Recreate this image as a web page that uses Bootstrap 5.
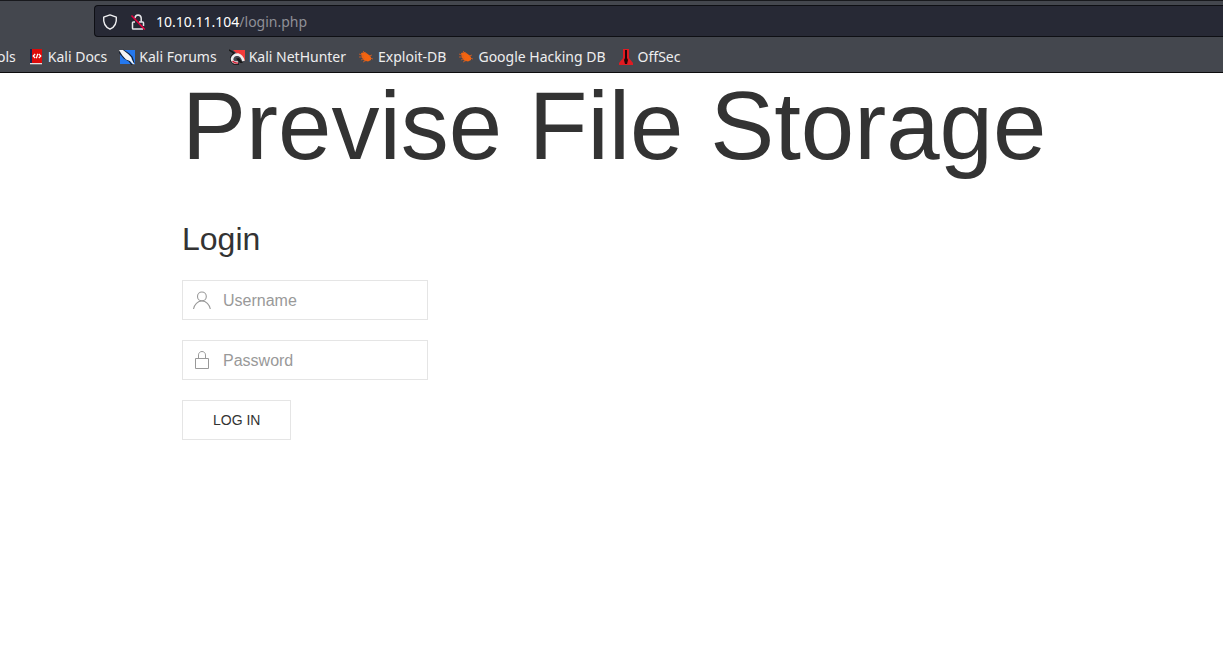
<!DOCTYPE html>
<html lang="en">
<head>
<meta charset="utf-8">
<meta name="viewport" content="width=device-width, initial-scale=1">
<title>Previse Login</title>
<link href="https://cdn.jsdelivr.net/npm/bootstrap@5.3.0/dist/css/bootstrap.min.css" rel="stylesheet">
<style>
body { font-family: "Liberation Sans", Arial, sans-serif; color: #333; background: #fff; }
.browser-bar { background: #44474e; border-top: 1px solid #18191d; border-bottom: 1px solid #0c0c0d; font-family: "Noto Sans", sans-serif; padding-top: 4px; }
.address { height: 32px; margin-left: 94px; padding: 1px 0 0 7px; gap: 10px; background: #272935; border: 1px solid #0e0f14; border-right: 0; border-radius: 4px 0 0 4px; font-size: 14px; line-height: 20px; color: #8f9097; }
.address b { color: #fff; font-weight: 400; }
.address-icons { gap: 12px; }
.bookmarks { height: 35px; gap: 12px; font-size: 14px; line-height: 20px; padding-top: 4px; margin-left: -3px; }
.bookmarks a { color: #eeeeef; gap: 4px; }
.bookmarks svg, .address svg { width: 16px; height: 16px; flex: none; }
.page-body { padding-left: 182px; }
.site-title { font-size: 96px; line-height: 106px; font-weight: 400; margin: 0 0 40px; }
.form-title { font-size: 32px; line-height: 41px; font-weight: 400; margin: 0 0 20px; }
.login-form { gap: 20px; }
.field { width: 246px; }
.field label { position: absolute; left: 10px; top: 10px; width: 20px; height: 20px; }
.field svg { display: block; width: 20px; height: 20px; fill: none; stroke: #999; }
.field .form-control { height: 40px; border: 1px solid #e5e5e5; border-radius: 0; padding: 2px 10px 0 40px; font-size: 16px; line-height: 24px; color: #666; }
.field .form-control::placeholder { color: #999; }
.login-btn { height: 40px; border: 1px solid #e5e5e5; border-radius: 0; padding: 0 30px; font-size: 14px; line-height: 38px; color: #333; text-transform: uppercase; }
</style>
</head>
<body>
<header class="browser-bar overflow-hidden">
  <div class="address d-flex align-items-center">
    <span class="address-icons d-flex">
    <svg viewBox="0 0 16 16" fill="none" stroke="#f0f0f2" stroke-width="1.4" stroke-linejoin="round"><path d="M8 .9 14.3 3.2Q15.2 11.8 8 15.2.8 11.8 1.7 3.2Z"/></svg>
    <svg viewBox="0 0 16 16" fill="none" stroke="#e6e6ea" stroke-width="1.5" stroke-linejoin="round"><path d="M5 4.2V4Q5.2 1 8 .9 11 1 11.2 4V8M5 8H3.3Q2.5 8 2.5 8.8V14.2Q2.5 15 3.3 15H13M9 8H12.7Q13.5 8 13.5 8.8V12"/><path d="M1.500 1.500 14.800 15.500" stroke="#e7003e" stroke-width="1.6"/></svg>
    </span>
    <span><b>10.10.11.104</b>/login.php</span>
  </div>
  <nav class="bookmarks d-flex align-items-center text-nowrap" aria-label="Bookmarks">
    <a href="#" class="text-decoration-none">ols</a>
    <a href="#" class="d-flex align-items-center text-decoration-none">
      <svg viewBox="0 0 16 16"><path d="M2 0h3v14H2z" fill="#16264f"/><path d="M4 0h10v14H4z" fill="#dc0a0a"/><path d="M2 14h12v1.300H2z" fill="#e8dede"/><path d="m7.200 5-2 2 2 2M10.800 5l2 2-2 2M9.800 4.700 8.300 9.300" fill="none" stroke="#fff" stroke-width="1.2"/></svg>Kali Docs</a>
    <a href="#" class="d-flex align-items-center text-decoration-none">
      <svg viewBox="0 0 16 16"><path d="M3 1h13v14H1V7z" fill="#2478ef"/><path d="m0 3 5 6 5 3 3 4M4 1l6 4 3 3 2 6" fill="none" stroke="#19212f" stroke-width="1.2"/><path d="M0 1h4l5 4 3 3 1 3 2.500 4.500-1.500-.5-3-3-4-1.500-3.500-4z" fill="#f4f4f4"/></svg>Kali Forums</a>
    <a href="#" class="d-flex align-items-center text-decoration-none">
      <svg viewBox="0 0 16 16"><path d="M4 1h12v11z" fill="#f23b3b"/><path d="m0 1 5 3-3 4v4l3 3h5" fill="none" stroke="#171717" stroke-width="1.500"/><path d="M7 9.500 10 9l4 5h-3z" fill="#171717"/><path d="M9 13.500Q3 14 3 10q1-4.500 6-4.500 4 1 5.500 6.500" fill="none" stroke="#eee" stroke-width="2.600"/><path d="M3.500 12q2 2.300 5.500 2" stroke="#d21f36" stroke-width="1.300" fill="none"/></svg>Kali NetHunter</a>
    <a href="#" class="d-flex align-items-center text-decoration-none">
      <svg viewBox="0 0 16 16"><path d="m3 4 4-1 4 3 2 2 0 3-3 1.500-4-1-2-3z" fill="#f4640f"/><path d="M1 5l5 2M1 8h5M3 11l4-2M5 13l4-2M5 2l3 3M11 7l3-1M12 9l3 1" stroke="#dc6020" stroke-width=".8"/></svg>Exploit-DB</a>
    <a href="#" class="d-flex align-items-center text-decoration-none">
      <svg viewBox="0 0 16 16"><path d="m3 4 4-1 4 3 2 2 0 3-3 1.500-4-1-2-3z" fill="#f4640f"/><path d="M1 5l5 2M1 8h5M3 11l4-2M5 13l4-2M5 2l3 3M11 7l3-1M12 9l3 1" stroke="#dc6020" stroke-width=".8"/></svg>Google Hacking DB</a>
    <a href="#" class="d-flex align-items-center text-decoration-none">
      <svg viewBox="0 0 16 16"><path d="M5 0h6v9l4 5v2H1v-2l4-5z" fill="#e01b22"/><path d="M7 1h2v8l1 2-1 4H7l-1-4 1-2z" fill="#210609"/></svg>OffSec</a>
  </nav>
</header>
<main class="page-body">
  <h1 class="site-title">Previse File Storage</h1>
  <h2 class="form-title">Login</h2>
  <form class="login-form d-flex flex-column align-items-start">
    <div class="field position-relative">
      <label for="username"><svg viewBox="0 0 20 20" stroke-width="1.1" role="img" aria-label="Username"><circle cx="9.900" cy="6.400" r="4.400"/><path d="M1.500 19c.8-4.500 4.200-8 8.400-8s7.600 3.500 8.400 8"/></svg></label>
      <input class="form-control" type="text" id="username" placeholder="Username">
    </div>
    <div class="field position-relative">
      <label for="password"><svg viewBox="0 0 20 20" role="img" aria-label="Password"><path d="M3.500 8.500h13v10h-13zM6.500 8V4.900C6.500 3 8.100 1.500 10 1.500s3.500 1.500 3.500 3.400V8"/></svg></label>
      <input class="form-control" type="password" id="password" placeholder="Password">
    </div>
    <button class="btn login-btn" type="button">Log in</button>
  </form>
</main>
<script src="https://cdn.jsdelivr.net/npm/bootstrap@5.3.0/dist/js/bootstrap.bundle.min.js"></script>
</body>
</html>
